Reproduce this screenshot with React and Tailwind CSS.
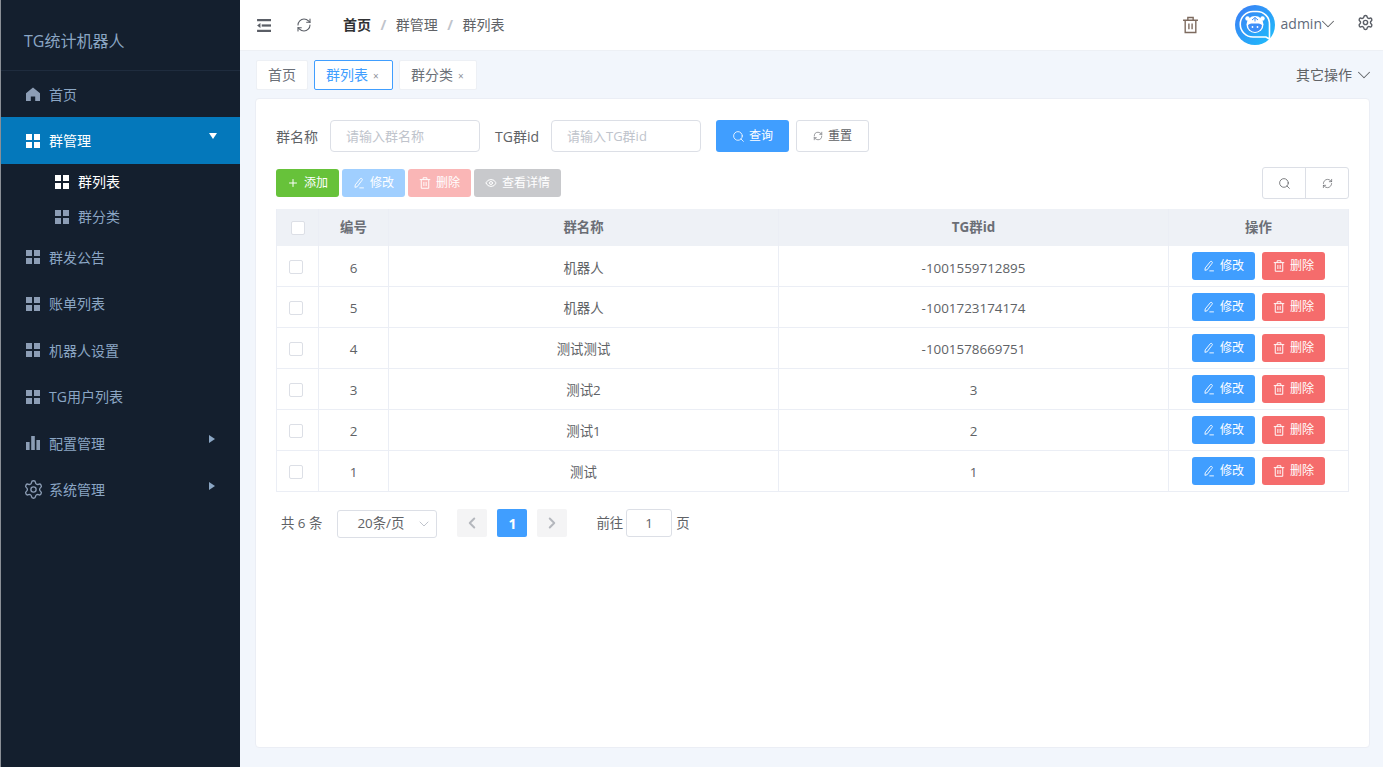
import { useState } from "react";
import { ChevronDown, ChevronLeft, ChevronRight, Eye, Plus, RefreshCw, Search, Settings } from "lucide-react";

const font = { fontFamily: '"Open Sans", "Noto Sans CJK SC", sans-serif' };

const rows = [
  { id: 6, name: "机器人", tg: "-1001559712895" },
  { id: 5, name: "机器人", tg: "-1001723174174" },
  { id: 4, name: "测试测试", tg: "-1001578669751" },
  { id: 3, name: "测试2", tg: "3" },
  { id: 2, name: "测试1", tg: "2" },
  { id: 1, name: "测试", tg: "1" },
];

function GridIcon({ className }) {
  return (
    <svg viewBox="0 0 14 14" className={className} fill="currentColor">
      <rect x="0" y="0" width="6" height="6" />
      <rect x="8" y="0" width="6" height="6" />
      <rect x="0" y="8" width="6" height="6" />
      <rect x="8" y="8" width="6" height="6" />
    </svg>
  );
}

function HomeIcon({ className }) {
  return (
    <svg viewBox="0 0 14 14" className={className} fill="currentColor">
      <path d="M7 .5 14 6.2V14H9.2V9.6H4.8V14H0V6.2Z" />
    </svg>
  );
}

function BarsIcon({ className }) {
  return (
    <svg viewBox="0 0 14 14" className={className} fill="currentColor">
      <rect x="0" y="6" width="3.6" height="8" />
      <rect x="5.2" y="0" width="3.6" height="14" />
      <rect x="10.4" y="4" width="3.6" height="10" />
    </svg>
  );
}

// sidebar gear is drawn bigger than the other menu icons
function GearIcon() {
  return <Settings className="w-[21px] h-[21px] -ml-[3.5px] mr-[5.5px] text-[#8c9db5]" strokeWidth={1.5} />;
}

function TrashIcon({ className }) {
  return (
    <svg viewBox="0 0 16 16" className={className} fill="none" stroke="currentColor" strokeWidth="1.3">
      <path d="M1 3.5h14M5.5 3.5V1h5v2.5M3 3.5V15h10V3.5M6.5 6.5v5.5M9.500 6.5v5.5" />
    </svg>
  );
}

function PencilIcon({ className }) {
  return (
    <svg viewBox="0 0 16 16" className={className} fill="none" stroke="currentColor" strokeWidth="1.2">
      <path d="M3 10.5 9.8 2.2a1.3 1.3 0 0 1 1.9-.1l.4.4a1.3 1.3 0 0 1 0 1.8L5.500 13 2.600 13.800Z" strokeLinejoin="round" />
      <path d="M8.500 14.500h6" />
    </svg>
  );
}

function FoldIcon({ className }) {
  return (
    <svg viewBox="0 0 16 14" className={className} fill="currentColor">
      <rect x="0" y="0" width="15" height="2.4" />
      <rect x="5" y="5.800" width="10" height="2.4" />
      <rect x="0" y="11.600" width="15" height="2.4" />
      <path d="M0 7 3.600 4.400V9.600Z" />
    </svg>
  );
}

function Avatar() {
  return (
    <svg viewBox="0 0 40 40" className="w-10 h-10">
      <defs>
        <linearGradient id="avatarBg" x1="0" y1="0" x2="1" y2="1">
          <stop offset="0" stopColor="#3d7bf5" />
          <stop offset="1" stopColor="#1cc0fb" />
        </linearGradient>
      </defs>
      <circle cx="20" cy="20" r="20" fill="url(#avatarBg)" />
      <path d="M18 6.500h4a12.500 12.500 0 0 1 12.500 12.500v15l-3.500-2H18A12.700 12.700 0 0 1 18 6.500Z" fill="none" stroke="#fff" strokeWidth="1.600" />
      <circle cx="12.500" cy="13.500" r="2.200" fill="#fff" />
      <circle cx="27.500" cy="13.500" r="2.200" fill="#fff" />
      <circle cx="20" cy="19.500" r="8.500" fill="#fff" />
      <path d="M13 20a7 7 0 0 0 14 0c-2.500-2-4.500-1.500-7-1.500s-4.500-.5-7 1.500Z" fill="#3d8ef8" />
      <circle cx="17.500" cy="22" r=".9" fill="#fff" />
      <circle cx="22.500" cy="22" r=".9" fill="#fff" />
      <path d="M20 12.500v4M17 15l3-2.500 3 2.500" stroke="#3d8ef8" strokeWidth="1" fill="none" />
    </svg>
  );
}

function MenuItem({ icon: Icon, label, active, arrow, first }) {
  return (
    <div className={`flex items-center pl-[25px] relative text-[14px] ${first ? "h-[46px]" : active ? "h-[47px]" : "h-[46.5px]"} ${active ? "bg-[#0478bb] text-white" : "text-[#8ba6c4]"}`}>
      <Icon className={`w-[14px] h-[14px] mr-[9px] ${active ? "text-white" : "text-[#8c9db5]"}`} />
      <span>{label}</span>
      {arrow === "down" && <span className="absolute right-[23px] top-[16px] w-0 h-0 border-x-[4.500px] border-x-transparent border-t-[6px] border-t-white" />}
      {arrow === "right" && <span className="absolute right-[25px] top-[15px] w-0 h-0 border-y-[4.500px] border-y-transparent border-l-[6px] border-l-[#8ba6c4]" />}
    </div>
  );
}

function Sidebar() {
  return (
    <aside className="w-[240px] shrink-0 bg-[#141f2e] border-l border-[#8a8f96]">
      <div className="h-[71px] flex items-center pl-[23px] pt-[11px] border-b border-[#1f2c3e] text-[16px] text-[#8ba6c4]">TG统计机器人</div>
      <MenuItem icon={HomeIcon} label="首页" first />
      <MenuItem icon={GridIcon} label="群管理" active arrow="down" />
      <div className="h-[35px] flex items-center pl-[54px] text-[14px] text-white">
        <GridIcon className="w-[14px] h-[14px] mr-[9px]" />
        群列表
      </div>
      <div className="h-[35px] flex items-center pl-[54px] text-[14px] text-[#8ba6c4]">
        <GridIcon className="w-[14px] h-[14px] mr-[9px] text-[#8c9db5]" />
        群分类
      </div>
      <MenuItem icon={GridIcon} label="群发公告" />
      <MenuItem icon={GridIcon} label="账单列表" />
      <MenuItem icon={GridIcon} label="机器人设置" />
      <MenuItem icon={GridIcon} label="TG用户列表" />
      <MenuItem icon={BarsIcon} label="配置管理" arrow="right" />
      <MenuItem icon={GearIcon} label="系统管理" arrow="right" />
    </aside>
  );
}

function Header() {
  return (
    <header className="h-[51px] shrink-0 bg-white border-b border-[#edf0f5] flex items-center pl-[17px] pr-[9px] text-[14px]">
      <FoldIcon className="w-[15px] h-[13px] text-[#5a5e66]" />
      <RefreshCw className="w-4 h-4 ml-6 text-[#5a5e66]" strokeWidth={1.6} />
      <div className="flex items-center -mt-[2px]">
        <span className="ml-[31px] font-bold text-[#303133]">首页</span>
        <span className="mx-[9.5px] text-[#c0c4cc] font-bold">/</span>
        <span className="text-[#606266]">群管理</span>
        <span className="mx-[9.5px] text-[#c0c4cc] font-bold">/</span>
        <span className="text-[#606266]">群列表</span>
      </div>
      <TrashIcon className="ml-auto w-[17px] h-[18px] text-[#7d6a5e]" />
      <div className="ml-[36px]"><Avatar /></div>
      <span className="ml-[6px] -mt-[3px] text-[#5f6a7a] text-[14px]">admin</span>
      <ChevronDown className="w-[22px] h-[22px] -ml-[5.5px] -mt-[3px] text-[#606266]" strokeWidth={1.1} />
      <Settings className="ml-[18.5px] -mt-[5px] w-[17px] h-[17px] text-[#5a5e66]" strokeWidth={2} />
    </header>
  );
}

function Tab({ label, active, closable }) {
  return (
    <div className={`h-[30px] flex items-center px-[11px] bg-white rounded-[2px] border text-[14px] ${active ? "border-[#409eff] text-[#409eff]" : "border-[#edf0f5] text-[#6b7078]"}`}>
      {label}
      {closable && <span className={`ml-[5px] text-[10px] text-[#8e9299] mt-[3px] ${active ? "w-[8px]" : "w-[7px]"}`}>×</span>}
    </div>
  );
}

function ActionButton({ icon: Icon, label, className }) {
  return (
    <button className={`h-7 rounded-[3px] flex items-center justify-center gap-[5px] text-white text-[12px] ${className}`}>
      <Icon className="w-3 h-3" />
      {label}
    </button>
  );
}

function Checkbox({ className }) {
  return <span className={`block w-[14px] h-[14px] bg-white border border-[#dcdfe6] rounded-[2px] ${className}`} />;
}

function SearchBar() {
  return (
    <div className="flex items-center text-[14px] text-[#606266]">
      <span>群名称</span>
      <input readOnly placeholder="请输入群名称" className="ml-[12px] w-[150px] h-8 rounded border border-[#dcdfe6] px-[15px] text-[13px] placeholder:text-[#c0c4cc] outline-none" />
      <span className="ml-[15px]">TG群id</span>
      <input readOnly placeholder="请输入TG群id" className="ml-[12px] w-[150px] h-8 rounded border border-[#dcdfe6] px-[15px] text-[13px] placeholder:text-[#c0c4cc] outline-none" />
      <button className="ml-[15px] w-[73px] h-8 rounded-[3px] bg-[#409eff] text-white text-[12px] flex items-center justify-center gap-[4px]">
        <Search className="w-[13px] h-[13px]" strokeWidth={1.5} />
        查询
      </button>
      <button className="ml-[7px] w-[73px] h-8 rounded-[3px] bg-white border border-[#dcdfe6] text-[#606266] text-[12px] flex items-center justify-center gap-[5px]">
        <RefreshCw className="w-[10px] h-[10px]" strokeWidth={1.5} />
        重置
      </button>
    </div>
  );
}

function Toolbar() {
  return (
    <div className="mt-[15px] flex items-center gap-[3px]">
      <ActionButton icon={Plus} label="添加" className="w-[63px] bg-[#67c23a]" />
      <ActionButton icon={PencilIcon} label="修改" className="w-[63px] bg-[#a0cfff]" />
      <ActionButton icon={TrashIcon} label="删除" className="w-[63px] bg-[#fab6b6]" />
      <ActionButton icon={Eye} label="查看详情" className="w-[87px] bg-[#c8c9cc]" />
      <div className="ml-auto h-8 flex rounded-[3px] border border-[#dcdfe6] text-[#606266]">
        <button className="w-[43px] flex items-center justify-center border-r border-[#dcdfe6]">
          <Search className="w-[13px] h-[13px]" strokeWidth={1.5} />
        </button>
        <button className="w-[42px] flex items-center justify-center">
          <RefreshCw className="w-[11px] h-[11px]" strokeWidth={1.5} />
        </button>
      </div>
    </div>
  );
}

function DataTable() {
  return (
    <table className="mt-[10px] w-[1072px] table-fixed border-collapse text-[13.4px] text-[#606266]">
      <colgroup>
        <col className="w-[42px]" />
        <col className="w-[70px]" />
        <col className="w-[390px]" />
        <col className="w-[390px]" />
        <col className="w-[180px]" />
      </colgroup>
      <thead>
        <tr className="h-[37px] bg-[#eef1f6] text-[#6b6e75]">
          <th className="border-x border-[#ebeef5] font-bold"><Checkbox className="ml-[14px]" /></th>
          <th className="border-r border-[#ebeef5] font-bold">编号</th>
          <th className="border-r border-[#ebeef5] font-bold">群名称</th>
          <th className="border-r border-[#ebeef5] font-bold">TG群id</th>
          <th className="border-r border-[#ebeef5] font-bold">操作</th>
        </tr>
      </thead>
      <tbody>
        {rows.map((row, i) => (
          <tr key={row.id} className={`border-b border-[#ebeef5] ${i === 0 ? "h-[40px]" : "h-[41px]"}`}>
            <td className="border-x border-[#ebeef5] pt-[2px]"><Checkbox className="ml-[12px]" /></td>
            <td className="border-r border-[#ebeef5] text-center pt-[4px]">{row.id}</td>
            <td className="border-r border-[#ebeef5] text-center pt-[4px]">{row.name}</td>
            <td className="border-r border-[#ebeef5] text-center pt-[4px]">{row.tg}</td>
            <td className="border-r border-[#ebeef5]">
              <div className="flex justify-center gap-[7px]">
                <ActionButton icon={PencilIcon} label="修改" className="w-[63px] bg-[#409eff]" />
                <ActionButton icon={TrashIcon} label="删除" className="w-[63px] bg-[#f56c6c]" />
              </div>
            </td>
          </tr>
        ))}
      </tbody>
    </table>
  );
}

function Pagination() {
  const [page] = useState(1);
  return (
    <div className="mt-[17px] flex items-center text-[13.4px] text-[#606266] pl-[5px]">
      <span>共 6 条</span>
      <div className="ml-[15px] mt-[1px] w-[100px] h-7 rounded-[3px] border border-[#dcdfe6] flex items-center pl-[19px] pr-1">
        20条/页
        <ChevronDown className="ml-auto w-4 h-4 text-[#c0c4cc]" strokeWidth={1.5} />
      </div>
      <button className="ml-[20px] w-[30px] h-7 rounded-[2px] bg-[#f4f4f5] flex items-center justify-center text-[#b4b7bd]">
        <ChevronLeft className="w-[18px] h-[18px]" strokeWidth={2.6} />
      </button>
      <button className="ml-[10px] w-[30px] h-7 rounded-[2px] bg-[#409eff] text-white font-bold text-[14px] flex items-center justify-center">{page}</button>
      <button className="ml-[10px] w-[30px] h-7 rounded-[2px] bg-[#f4f4f5] flex items-center justify-center text-[#b4b7bd]">
        <ChevronRight className="w-[18px] h-[18px]" strokeWidth={2.6} />
      </button>
      <span className="ml-[29px]">前往</span>
      <span className="ml-[3px] w-[46px] h-7 rounded-[3px] border border-[#dcdfe6] flex items-center justify-center">1</span>
      <span className="ml-[4px]">页</span>
    </div>
  );
}

export default function App() {
  return (
    <div className="w-[1383px] h-[767px] flex overflow-hidden" style={font}>
      <Sidebar />
      <main className="flex-1 min-w-0 flex flex-col bg-[#f2f6fc]">
        <Header />
        <div className="h-[47px] shrink-0 flex items-center pl-[16px] pr-[8.5px] gap-[6px]">
          <Tab label="首页" />
          <Tab label="群列表" active closable />
          <Tab label="群分类" closable />
          <span className="ml-auto text-[14px] text-[#606266]">其它操作</span>
          <ChevronDown className="w-[22px] h-[22px] -ml-[5.5px] text-[#606266]" strokeWidth={1.1} />
        </div>
        <section className="ml-[15px] mr-[13px] h-[650px] bg-white rounded border border-[#ebeef5] pt-[21px] pl-[20px] pr-[20px]">
          <SearchBar />
          <Toolbar />
          <DataTable />
          <Pagination />
        </section>
      </main>
    </div>
  );
}
